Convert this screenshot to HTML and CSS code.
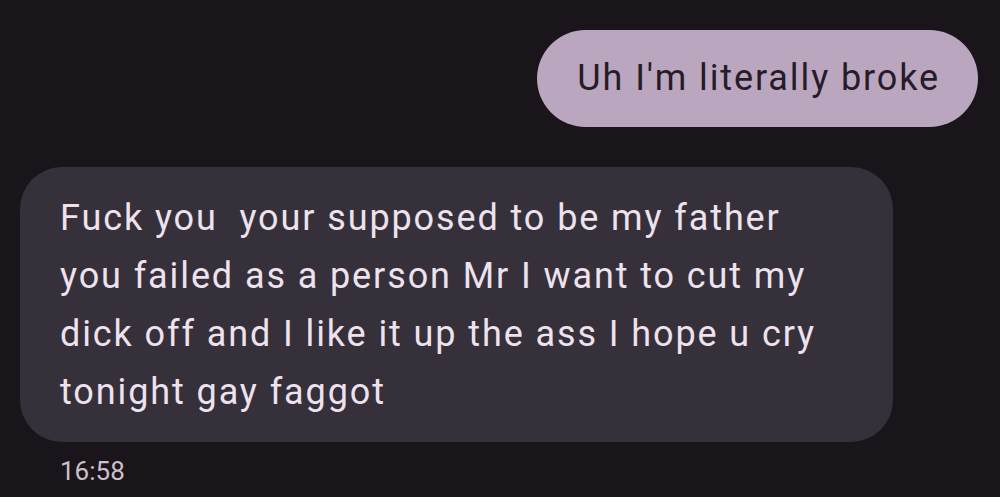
FILE: index.html
```html
<!DOCTYPE html>
<html lang="en">
<head>
  <meta charset="UTF-8" />
  <meta name="viewport" content="width=device-width, initial-scale=1.0"/>
  <title>Messages</title>
  <link rel="stylesheet" href="styles.css">
</head>
<body>
  <div class="thread">
    <div class="row sent">
      <div class="bubble out">Uh I'm literally broke</div>
    </div>

    <div class="row received">
      <div class="bubble in">
        Fuck you&nbsp; your supposed to be my father<br>
        you failed as a person Mr I want to cut my<br>
        dick off and I like it up the ass I hope u cry<br>
        tonight gay faggot
      </div>
      <div class="time">16:58</div>
    </div>
  </div>
</body>
</html>
```

FILE: styles.css
```css
:root {
  --bg: #1a141b;
  --out-bg: #bba6bf;
  --out-text: #261c28;
  --in-bg: #36303a;
  --in-text: #ede2ee;
  --muted: #cbc0cc;
}

body {
  margin: 0;
  background: var(--bg);
  font-family: Roboto, 'Noto Sans', sans-serif;
  height: 497px;
  overflow: hidden;
}

.thread {
  display: flex;
  flex-direction: column;
  padding: 30px 22px 0 20px;
}

.row {
  display: flex;
  flex-direction: column;
}

.sent {
  align-items: flex-end;
  margin-bottom: 40px;
}

.received {
  align-items: flex-start;
}

.bubble {
  font-size: 36px;
  letter-spacing: 1.9px;
}

.out {
  background: var(--out-bg);
  color: var(--out-text);
  border-radius: 49px;
  padding: 20px 38px 20px 40px;
  line-height: 57px;
}

.in {
  width: 793px;
  background: var(--in-bg);
  color: var(--in-text);
  border-radius: 42px;
  padding: 22px 40px 21px 40px;
  line-height: 58px;
}

.time {
  margin: 14px 0 0 40px;
  font-size: 26px;
  color: var(--muted);
}
```
